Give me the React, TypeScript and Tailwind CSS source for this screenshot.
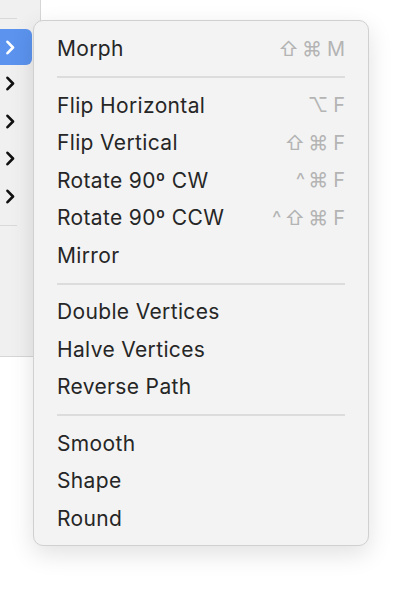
import React from 'react';

type Row = { label: string; keys?: string[] } | 'sep';

const rows: Row[] = [
  { label: 'Morph', keys: ['⇧', '⌘', 'M'] },
  'sep',
  { label: 'Flip Horizontal', keys: ['⌥', 'F'] },
  { label: 'Flip Vertical', keys: ['⇧', '⌘', 'F'] },
  { label: 'Rotate 90º CW', keys: ['^', '⌘', 'F'] },
  { label: 'Rotate 90º CCW', keys: ['^', '⇧', '⌘', 'F'] },
  { label: 'Mirror' },
  'sep',
  { label: 'Double Vertices' },
  { label: 'Halve Vertices' },
  { label: 'Reverse Path' },
  'sep',
  { label: 'Smooth' },
  { label: 'Shape' },
  { label: 'Round' },
];

const Chevron = ({ white }: { white?: boolean }) => (
  <svg width="11" height="15" viewBox="0 0 11 15" fill="none">
    <path
      d="M2.5 1.8 L8 7.5 L2.5 13.2"
      stroke={white ? '#ffffff' : '#111111'}
      strokeWidth="2.6"
      strokeLinecap="round"
      strokeLinejoin="round"
    />
  </svg>
);

// 左側のパネル（メニューの下に隠れている部分）
const SidePanel = () => (
  <div className="w-[41px] h-[357px] bg-[#f0f0f0] border-r border-b border-[#d6d6d6] flex flex-col">
    <div className="h-[18px]" />
    <div className="h-px w-[17px] bg-[#d9d9d9]" />
    <div className="h-[10px]" />
    <div className="h-[36px] w-[32px] bg-[#5b93ee] rounded-r-[6px] flex items-center pl-[5px]">
      <Chevron white />
    </div>
    {[0, 1, 2, 3].map((i) => (
      <div key={i} className="h-[37.5px] flex items-center pl-[5px]">
        <Chevron />
      </div>
    ))}
    <div className="h-[10px]" />
    <div className="h-px w-[17px] bg-[#d9d9d9]" />
  </div>
);

const App = () => {
  return (
    <div className="relative w-[400px] h-[600px] bg-white overflow-hidden font-['Inter','Liberation_Sans',sans-serif]">
      <SidePanel />
      <div className="absolute left-[33px] top-[20px] w-[336px] rounded-[10px] bg-[#f3f3f3] border border-[#d0d0d0] shadow-[0_8px_24px_rgba(0,0,0,0.12)] pt-[9px] pb-[8px]">
        {rows.map((row, index) =>
          row === 'sep' ? (
            <div key={index} className="h-[19px] flex items-center px-[23px]">
              <div className="h-[2px] w-full bg-[#dcdcdc]" />
            </div>
          ) : (
            <div key={index} className="h-[37.5px] flex items-center justify-between pl-[23px] pr-[23px]">
              <span className="text-[21px] text-[#262626] tracking-[0.35px]">{row.label}</span>
              {row.keys && (
                <span className="flex items-center gap-[3px] text-[20px] text-[#b4b4b4] font-['Inter','DejaVu_Sans',sans-serif]">
                  {row.keys.map((k, i) => (
                    <span key={i} className={k === 'F' || k === 'M' ? 'ml-[2px]' : ''}>
                      {k}
                    </span>
                  ))}
                </span>
              )}
            </div>
          )
        )}
      </div>
    </div>
  );
};

export default App;
